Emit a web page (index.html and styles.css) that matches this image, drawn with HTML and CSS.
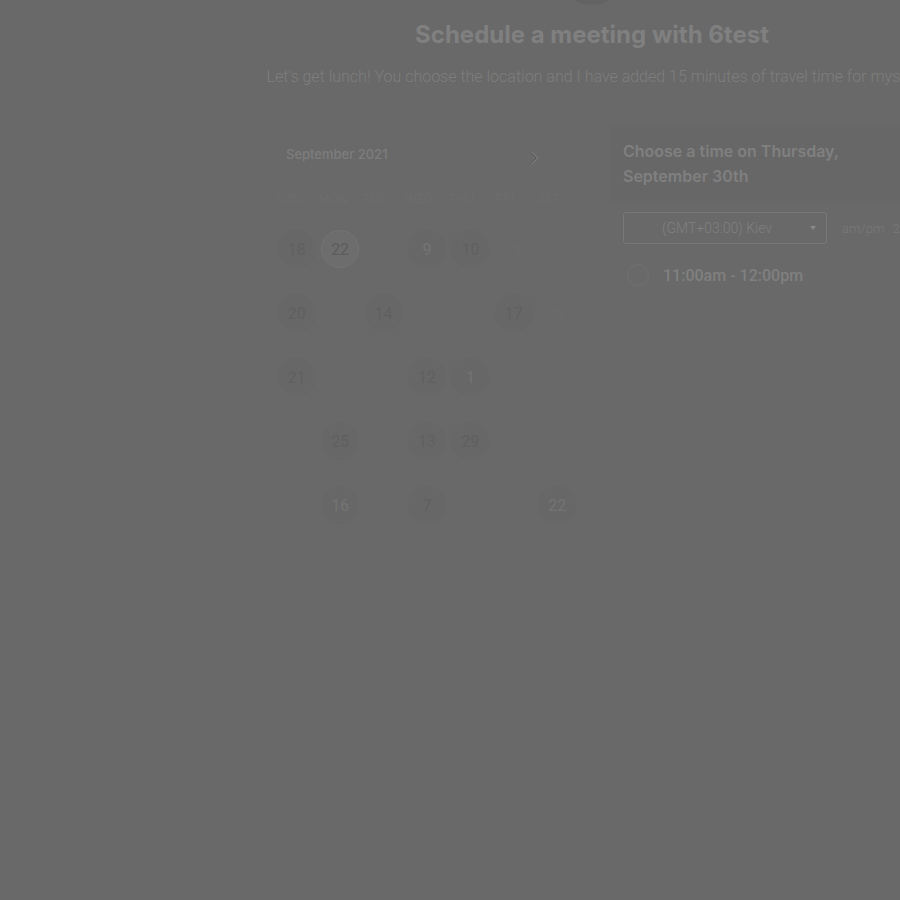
FILE: index.html
```html
<!DOCTYPE html>
<html lang="en">
<head>
<meta charset="utf-8">
<title>Schedule a meeting with 6test</title>
<link rel="stylesheet" href="styles.css">
</head>
<body>
<main class="page">
  <header class="intro">
    <div class="avatar"></div>
    <h1>Schedule a meeting with 6test</h1>
    <p>Let's get lunch! You choose the location and I have added 15 minutes of travel time for myself</p>
  </header>
  <div class="panels">
    <section class="calendar">
      <div class="month">
        <h2>September 2021</h2>
        <button class="arrow prev" aria-label="Previous month"><svg viewBox="0 0 8 14" width="8" height="14"><path d="M7 2 2 7l5 5"/></svg></button>
        <button class="arrow" aria-label="Next month"><svg viewBox="0 0 8 14" width="8" height="14"><path class="shade" d="m0 2 5 5-5 5"/><path d="m1 1 6 6-6 6"/></svg></button>
      </div>
      <table>
        <thead><tr><th>SUN</th><th>MON</th><th>TUE</th><th>WED</th><th>THU</th><th>FRI</th><th>SAT</th></tr></thead>
        <tbody>
          <tr><td><button class="day">18</button></td><td><button class="day selected">22</button></td><td></td><td><button class="day bright">9</button></td><td><button class="day">10</button></td><td><span class="off">19</span></td><td></td></tr>
          <tr><td><button class="day">20</button></td><td></td><td><button class="day">14</button></td><td></td><td></td><td><button class="day">17</button></td><td><span class="off">12</span></td></tr>
          <tr><td><button class="day">21</button></td><td></td><td></td><td><button class="day">12</button></td><td><button class="day bright">1</button></td><td></td><td></td></tr>
          <tr><td></td><td><button class="day">25</button></td><td></td><td><button class="day">13</button></td><td><button class="day">29</button></td><td></td><td></td></tr>
          <tr><td></td><td><button class="day bright">16</button></td><td></td><td><button class="day">7</button></td><td></td><td></td><td><button class="day bright">22</button></td></tr>
        </tbody>
      </table>
    </section>
    <section class="times">
      <h2>Choose a time on Thursday, September 30th</h2>
      <div class="options">
        <div class="zone">
          <select aria-label="Time zone"><option>(GMT+03:00) Kiev</option></select>
          <svg class="caret" viewBox="0 0 6 4" width="6" height="4"><path d="M0 0h6L3 4z"/></svg>
        </div>
        <span class="format">am/pm</span>
        <span class="format">24h</span>
      </div>
      <label class="slot"><input type="radio" name="slot">11:00am - 12:00pm</label>
    </section>
  </div>
</main>
</body>
</html>
```
FILE: styles.css
```css
* { box-sizing: border-box; }
body {
  margin: 0;
  min-height: 100vh;
  overflow: hidden;
  background: #696969;
  color: #808080;
  font-family: Roboto, sans-serif;
}
h1, h2, p { margin: 0; }
button, select { font: inherit; color: inherit; }
.page { min-width: 1184px; }
.intro { text-align: center; }
.avatar {
  width: 64px;
  height: 64px;
  margin: -59px auto 0;
  border-radius: 50%;
  background: #636363;
}
h1 {
  padding-top: 14px;
  font: 700 24px/32px Inter, sans-serif;
}
.intro p {
  padding-top: 14px;
  font-size: 16px;
  font-weight: 300;
  line-height: 24px;
  color: #7e7e7e;
}
.panels {
  display: flex;
  justify-content: center;
  align-items: flex-start;
  gap: 32px;
  padding: 36px 0 0 2px;
}
.calendar {
  width: 314px;
  border: 1px solid #686868;
}
.month {
  display: flex;
  align-items: center;
  height: 64px;
  padding: 0 37px 0 22px;
}
.month h2 {
  flex: 1;
  padding-bottom: 8px;
  font: 500 13px/16px Inter, sans-serif;
  color: #7d7d7d;
}
.arrow {
  display: flex;
  margin-left: 62px;
  padding: 0;
  border: 0;
  background: none;
}
.arrow path { fill: none; stroke: #7e7e7e; stroke-width: 1; }
.arrow .shade { stroke: #5c5c5c; }
.arrow.prev { margin-left: 0; }
.arrow.prev path { stroke: #6c6c6c; }
table {
  width: 304px;
  margin-left: 11px;
  border-collapse: collapse;
  table-layout: fixed;
}
th {
  height: 27px;
  padding: 0 18px 10px 0;
  font-size: 13px;
  font-weight: 300;
  line-height: 16px;
  color: #6e6e6e;
}
td { height: 64px; padding: 0; text-align: center; }
.day {
  width: 38px;
  height: 38px;
  padding: 0;
  border: 0;
  border-radius: 50%;
  background: #676767;
  color: #606060;
  font-size: 16px;
}
.day.bright { color: #747474; }
.day.selected { border: 1px solid #747474; background: #6d6d6d; color: #5c5c5c; }
.off { font-size: 14px; color: #6c6c6c; }
.times { width: 314px; }
.times h2 {
  padding: 14px 80px 14px 14px;
  background: #676767;
  font: 600 16px/25px Inter, sans-serif;
}
.options {
  display: flex;
  align-items: center;
  gap: 8px;
  padding: 9px 0 0 14px;
}
.zone { position: relative; margin-right: 7px; }
select {
  appearance: none;
  width: 204px;
  height: 32px;
  padding: 0 24px 0 38px;
  border: 1px solid #787878;
  border-radius: 3px;
  background: transparent;
  font-size: 14px;
  font-weight: 300;
}
.caret { position: absolute; top: 14px; right: 11px; fill: #8a8a8a; }
.format { font-size: 13px; font-weight: 300; color: #797979; }
.slot {
  display: flex;
  align-items: center;
  gap: 14px;
  padding: 20px 0 0 18px;
  font-size: 16px;
  font-weight: 500;
}
.slot input {
  appearance: none;
  width: 22px;
  height: 22px;
  margin: 0;
  border: 1px solid #707070;
  border-radius: 50%;
}
```
